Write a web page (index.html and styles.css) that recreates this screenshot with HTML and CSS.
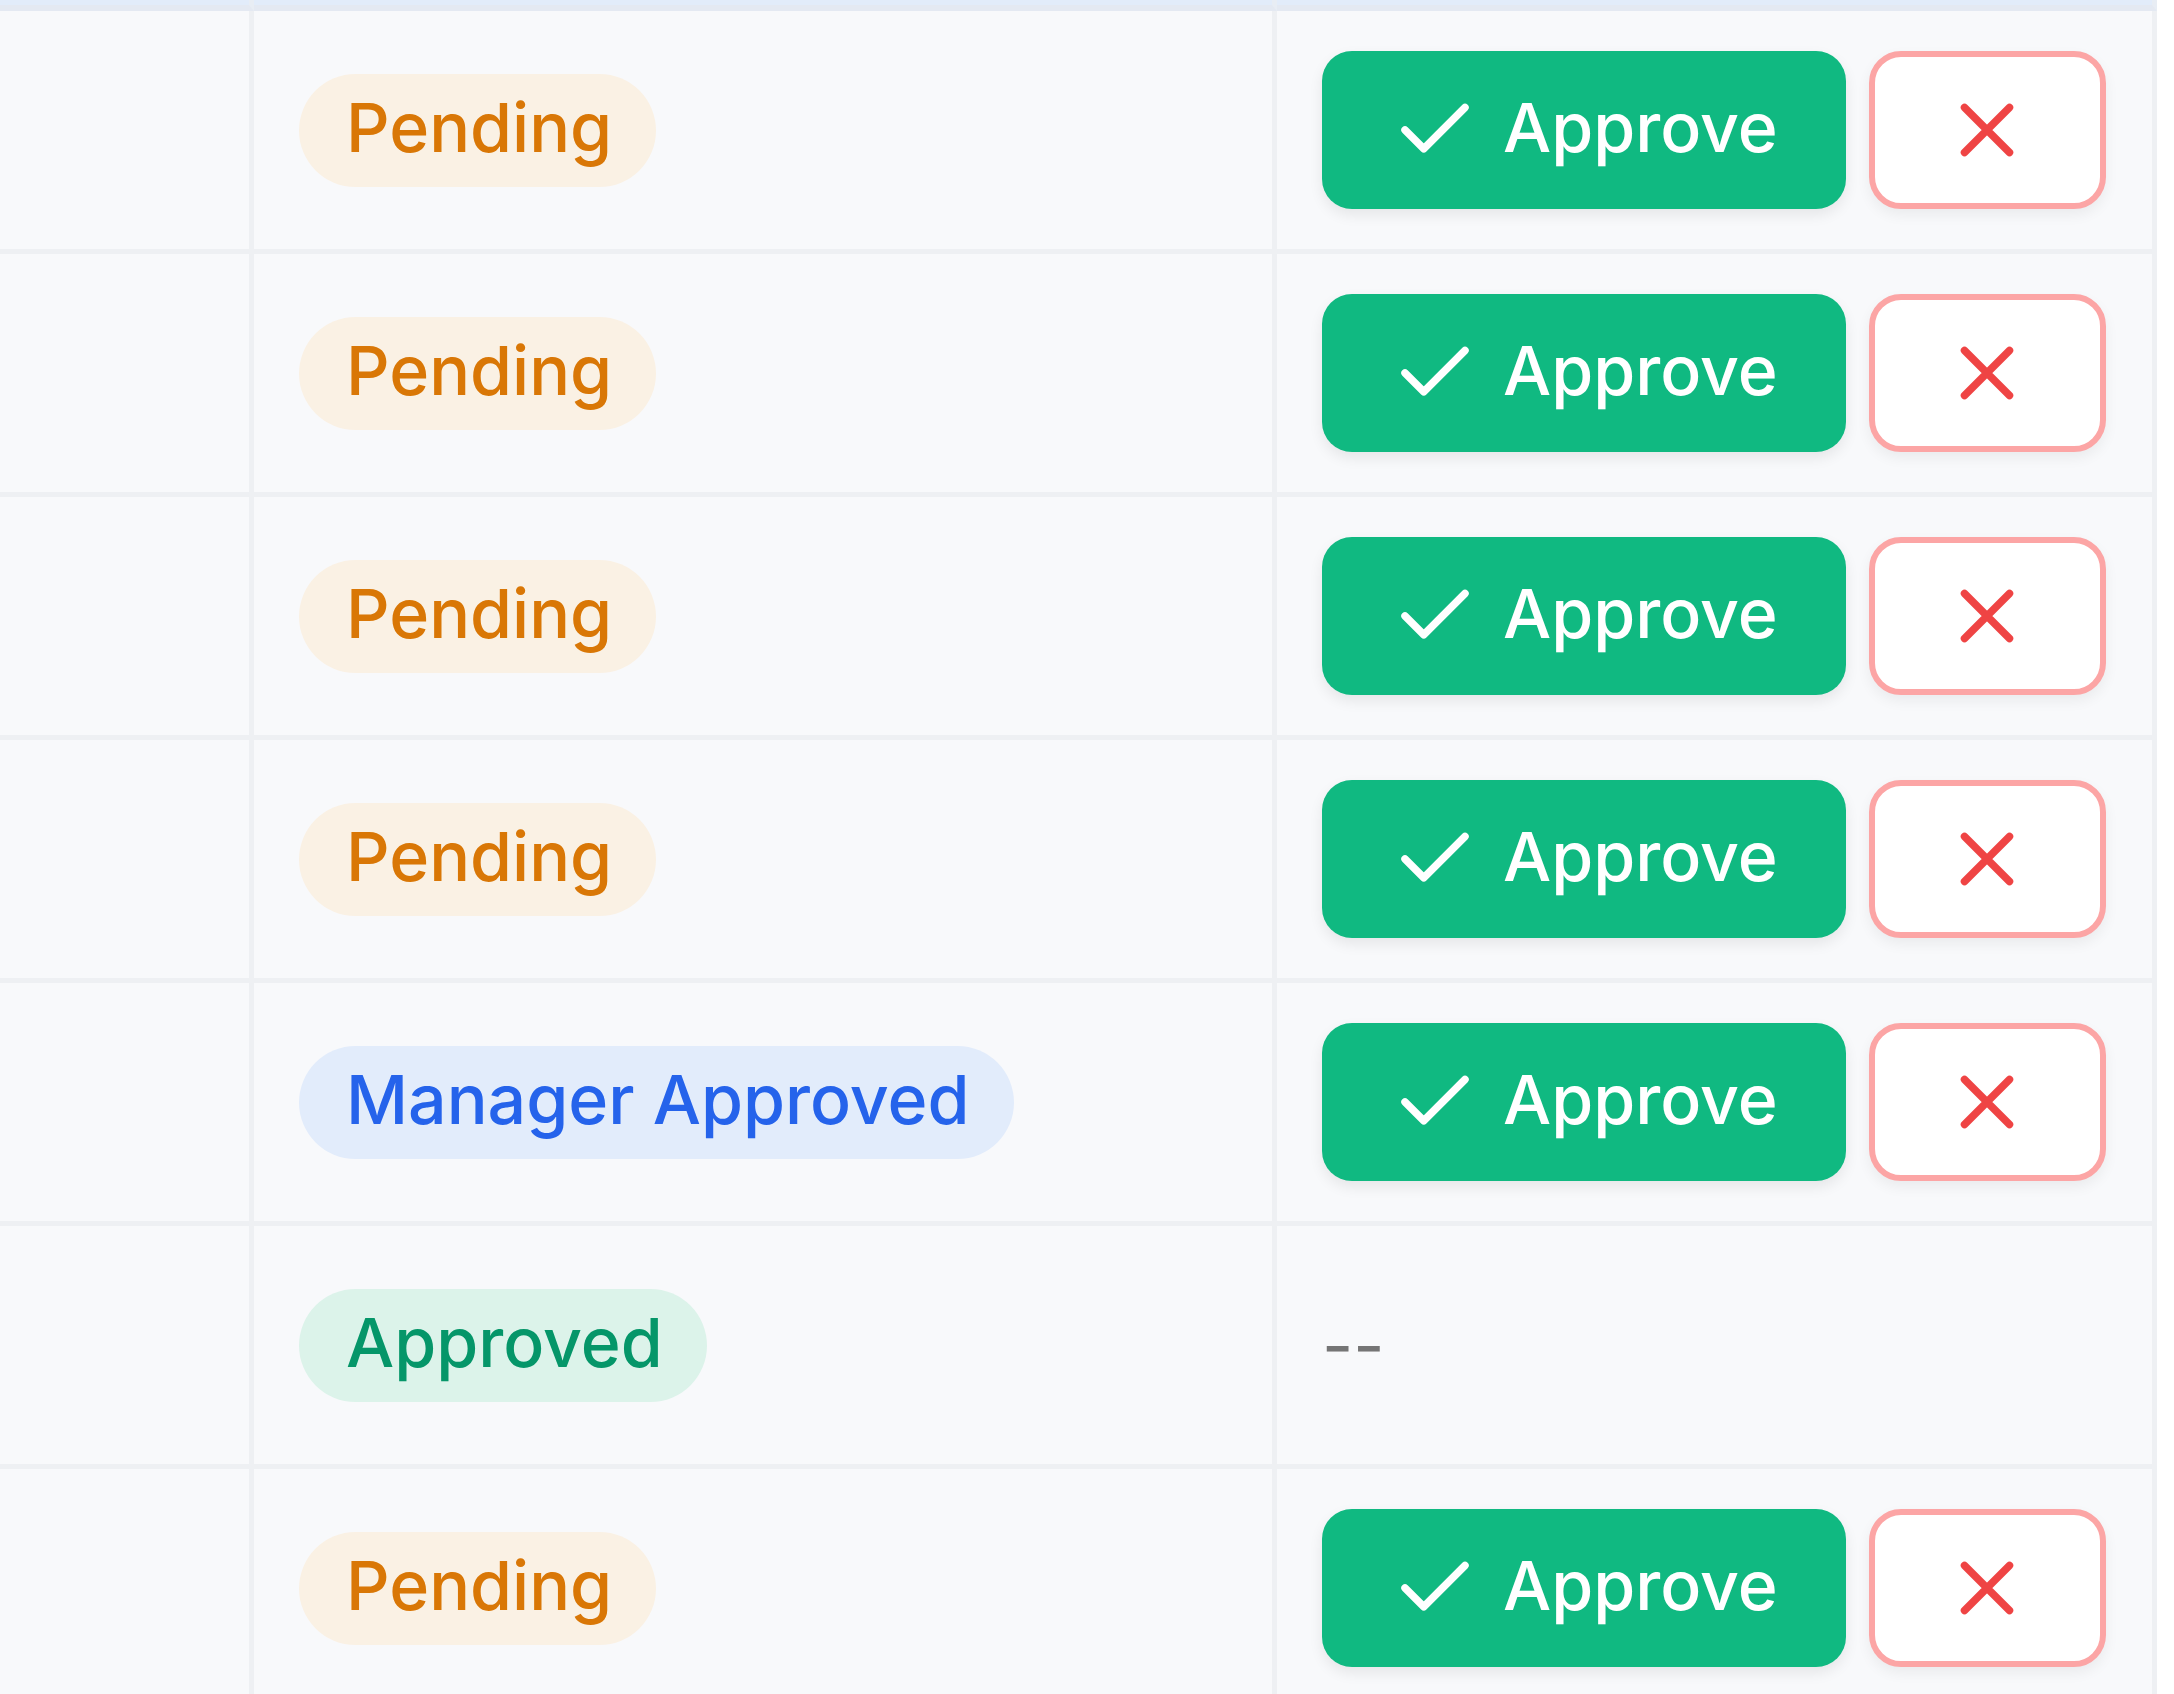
FILE: index.html
```html
<!DOCTYPE html>
<html>
<head>
    <meta charset="UTF-8">
    <meta name="viewport" content="width=device-width, initial-scale=1.0">
    <title>Approvals</title>
    <link rel="stylesheet" href="styles.css">
</head>
<body>
    <table class="approvals">
        <thead>
            <tr>
                <th class="col-name"></th>
                <th class="col-status"></th>
                <th class="col-actions"></th>
            </tr>
        </thead>
        <tbody>
            <tr>
                <td></td>
                <td><span class="pill pending">Pending</span></td>
                <td>
                    <div class="actions">
                        <button class="btn-approve"><svg viewBox="0 0 24 24"><polyline points="20 6 9 17 4 12"/></svg><span>Approve</span></button>
                        <button class="btn-reject"><svg viewBox="0 0 24 24"><path d="M18 6 6 18M6 6l12 12"/></svg></button>
                    </div>
                </td>
            </tr>
            <tr>
                <td></td>
                <td><span class="pill pending">Pending</span></td>
                <td>
                    <div class="actions">
                        <button class="btn-approve"><svg viewBox="0 0 24 24"><polyline points="20 6 9 17 4 12"/></svg><span>Approve</span></button>
                        <button class="btn-reject"><svg viewBox="0 0 24 24"><path d="M18 6 6 18M6 6l12 12"/></svg></button>
                    </div>
                </td>
            </tr>
            <tr>
                <td></td>
                <td><span class="pill pending">Pending</span></td>
                <td>
                    <div class="actions">
                        <button class="btn-approve"><svg viewBox="0 0 24 24"><polyline points="20 6 9 17 4 12"/></svg><span>Approve</span></button>
                        <button class="btn-reject"><svg viewBox="0 0 24 24"><path d="M18 6 6 18M6 6l12 12"/></svg></button>
                    </div>
                </td>
            </tr>
            <tr>
                <td></td>
                <td><span class="pill pending">Pending</span></td>
                <td>
                    <div class="actions">
                        <button class="btn-approve"><svg viewBox="0 0 24 24"><polyline points="20 6 9 17 4 12"/></svg><span>Approve</span></button>
                        <button class="btn-reject"><svg viewBox="0 0 24 24"><path d="M18 6 6 18M6 6l12 12"/></svg></button>
                    </div>
                </td>
            </tr>
            <tr>
                <td></td>
                <td><span class="pill manager">Manager Approved</span></td>
                <td>
                    <div class="actions">
                        <button class="btn-approve"><svg viewBox="0 0 24 24"><polyline points="20 6 9 17 4 12"/></svg><span>Approve</span></button>
                        <button class="btn-reject"><svg viewBox="0 0 24 24"><path d="M18 6 6 18M6 6l12 12"/></svg></button>
                    </div>
                </td>
            </tr>
            <tr>
                <td></td>
                <td><span class="pill approved">Approved</span></td>
                <td><span class="none">--</span></td>
            </tr>
            <tr>
                <td></td>
                <td><span class="pill pending">Pending</span></td>
                <td>
                    <div class="actions">
                        <button class="btn-approve"><svg viewBox="0 0 24 24"><polyline points="20 6 9 17 4 12"/></svg><span>Approve</span></button>
                        <button class="btn-reject"><svg viewBox="0 0 24 24"><path d="M18 6 6 18M6 6l12 12"/></svg></button>
                    </div>
                </td>
            </tr>
        </tbody>
    </table>
</body>
</html>
```

FILE: styles.css
```css
html, body {
    overflow: hidden;
}
body {
    margin: 0;
    background: #ffffff;
    font-family: 'Inter', 'Noto Sans', sans-serif;
}
.approvals {
    width: 2157px;
    table-layout: fixed;
    border-collapse: separate;
    border-spacing: 0;
    background: #f8f9fb;
}
.approvals th {
    box-sizing: border-box;
    height: 11px;
    padding: 0;
    background: #e2ecfa;
    border-bottom: 6px solid #e4e9f2;
    border-right: 5px solid #e8edf4;
}
.col-name {
    width: 254px;
}
.col-status {
    width: 1023px;
}
.col-actions {
    width: 880px;
}
.approvals td {
    box-sizing: border-box;
    height: 243px;
    padding: 0 45px;
    vertical-align: middle;
    border-right: 5px solid #eef0f3;
    border-bottom: 5px solid #eef0f3;
}
.pill {
    display: inline-block;
    padding: 12px 44px 18px 47px;
    border-radius: 999px;
    font-size: 68px;
    line-height: 83px;
    font-weight: 500;
}
.pending {
    background: #faf1e4;
    color: #d97706;
}
.manager {
    background: #e2ecfb;
    color: #2563eb;
}
.approved {
    background: #dcf3ea;
    color: #059669;
}
.actions {
    display: flex;
    align-items: center;
    gap: 23px;
}
.actions svg {
    width: 90px;
    height: 90px;
    fill: none;
    stroke: currentColor;
    stroke-width: 2;
    stroke-linecap: round;
    stroke-linejoin: round;
}
.btn-approve {
    display: flex;
    align-items: center;
    gap: 23px;
    height: 158px;
    padding: 0 68px;
    border: none;
    border-radius: 30px;
    background: #10b981;
    color: #ffffff;
    font-family: inherit;
    font-size: 68px;
    font-weight: 500;
    box-shadow: 0 6px 14px rgba(0, 0, 0, 0.08);
}
.btn-approve span {
    padding-bottom: 6px;
}
.btn-reject {
    display: flex;
    align-items: center;
    justify-content: center;
    box-sizing: border-box;
    width: 237px;
    height: 158px;
    padding: 0;
    border: 6px solid #fca5a5;
    border-radius: 32px;
    background: #ffffff;
    color: #ef4444;
    box-shadow: 0 6px 14px rgba(0, 0, 0, 0.06);
}
.none {
    font-size: 68px;
    color: #757575;
}
```
